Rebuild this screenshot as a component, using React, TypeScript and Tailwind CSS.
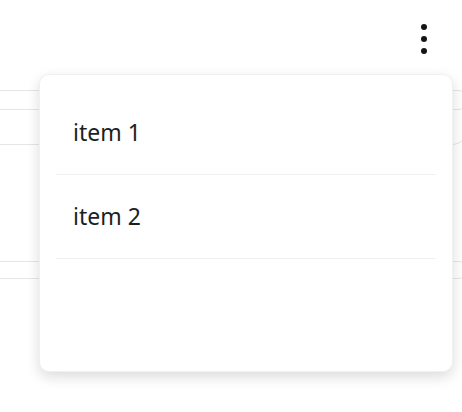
import { useState } from 'react';

const items = ['item 1', 'item 2'];

function KebabIcon() {
    return (
        <svg width="8" height="32" viewBox="0 0 8 32" fill="#141414">
            <circle cx="4" cy="4" r="3" />
            <circle cx="4" cy="16" r="3" />
            <circle cx="4" cy="28" r="3" />
        </svg>
    );
}

export default function App() {
    const [selected, setSelected] = useState<string | null>(null);

    return (
        <div
            className="relative w-[462px] h-[412px] bg-white overflow-hidden"
            style={{ fontFamily: '"Noto Sans", "Open Sans", sans-serif' }}
        >
            {/* Header with menu trigger */}
            <div className="flex justify-end h-[90px] pt-[23px] pr-[34px]">
                <button className="flex items-start" aria-label="menu">
                    <KebabIcon />
                </button>
            </div>

            {/* Background content, partly hidden under the menu */}
            <div className="ml-[-10px] w-[478px] flex flex-col">
                <div className="h-[20px] border border-[#e6e6e6] rounded-r-[10px]" />
                <div className="h-[35px] border-x border-b border-[#e6e6e6] rounded-br-[16px]" />
                <div className="h-[116px]" />
                <div className="h-[18px] border border-[#e6e6e6] rounded-r-[16px]" />
            </div>

            {/* Dropdown menu */}
            <div className="absolute left-[39px] top-[74px] w-[414px] h-[298px] rounded-[10px] bg-white border border-[#f0f0f0] shadow-[0_5px_14px_rgba(0,0,0,0.14)]">
                <ul className="px-[16px] pt-[16px]">
                    {items.map(item => (
                        <li
                            key={item}
                            onClick={() => setSelected(item)}
                            className={`h-[84px] flex items-center px-[17px] border-b border-[#f0f0f0] text-[23px] text-[#1e1e1e] cursor-pointer ${selected === item ? 'bg-[#fafafa]' : ''}`}
                        >
                            {item}
                        </li>
                    ))}
                </ul>
            </div>
        </div>
    );
}
